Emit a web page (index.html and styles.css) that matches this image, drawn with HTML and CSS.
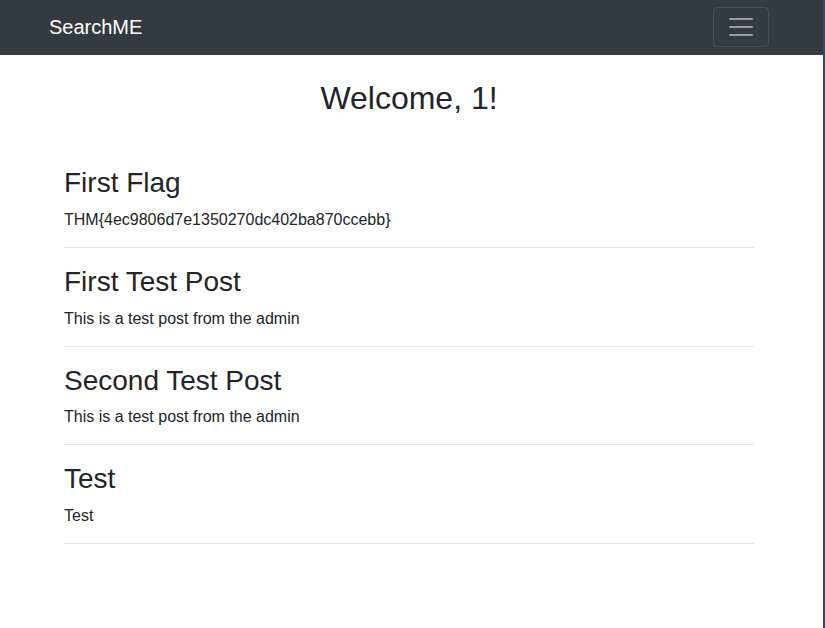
FILE: index.html
```html
<!DOCTYPE html>
<html lang="en">
<head>
<meta charset="utf-8">
<title>SearchME</title>
<link rel="stylesheet" href="styles.css">
</head>
<body>
<div class="page">
  <nav class="navbar">
    <div class="container nav-inner">
      <a class="brand" href="#">SearchME</a>
      <button class="toggler" type="button" aria-label="Toggle navigation">
        <svg width="30" height="30" viewBox="0 0 30 30" aria-hidden="true"><path d="M4 7h22M4 15h22M4 23h22" stroke="rgba(255,255,255,0.5)" stroke-width="2" stroke-linecap="round" fill="none"/></svg>
      </button>
    </div>
  </nav>
  <main class="container main">
    <h2 class="welcome">Welcome, 1!</h2>
    <section class="posts">
      <article class="post">
        <h3>First Flag</h3>
        <p>THM{4ec9806d7e1350270dc402ba870ccebb}</p>
        <hr>
      </article>
      <article class="post">
        <h3>First Test Post</h3>
        <p>This is a test post from the admin</p>
        <hr>
      </article>
      <article class="post">
        <h3>Second Test Post</h3>
        <p>This is a test post from the admin</p>
        <hr>
      </article>
      <article class="post">
        <h3>Test</h3>
        <p>Test</p>
        <hr>
      </article>
    </section>
  </main>
</div>
</body>
</html>
```
FILE: styles.css
```css
html, body {
  margin: 0;
  padding: 0;
  height: 100%;
}
body {
  font-family: "Liberation Sans", Arial, sans-serif;
  font-size: 16px;
  line-height: 1.5;
  color: #212529;
  background: #fff;
  border-right: 2px solid #2c4a6a;
  box-sizing: border-box;
  overflow: hidden;
}
.navbar {
  background: #343a40;
  padding: 7px 0 8px;
  height: 55px;
  box-sizing: border-box;
}
.container {
  width: 720px;
  margin-left: 49px;
  box-sizing: border-box;
}
.nav-inner {
  display: flex;
  align-items: center;
  justify-content: space-between;
}
.brand {
  color: #fff;
  text-decoration: none;
  font-size: 20px;
  line-height: 30px;
}
.toggler {
  width: 56px;
  height: 40px;
  padding: 4px 12px;
  border: 1px solid rgba(255,255,255,0.1);
  border-radius: 4px;
  background: transparent;
  display: flex;
  align-items: center;
  justify-content: center;
  box-sizing: border-box;
}
.toggler svg {
  display: block;
}
.main {
  padding: 0 15px;
}
.welcome {
  text-align: center;
  font-size: 32px;
  font-weight: 400;
  line-height: 1.2;
  margin: 24px 0 0;
}
.posts {
  margin-top: 48px;
}
.post h3 {
  font-size: 28px;
  font-weight: 400;
  line-height: 1.2;
  padding-top: 1px;
  margin: 0 0 8px;
}
.post p {
  margin: 0 0 15px;
}
.post hr {
  margin: 0 0 16px;
  border: 0;
  border-top: 1px solid rgba(0,0,0,0.1);
}
```
